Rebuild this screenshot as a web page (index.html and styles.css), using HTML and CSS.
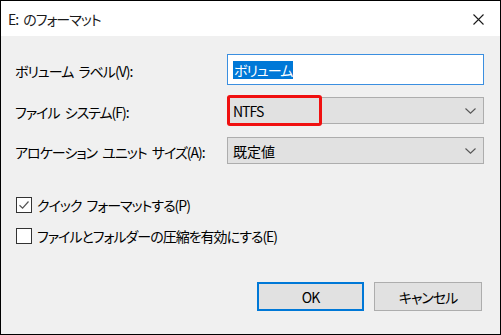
FILE: index.html
```html
<!DOCTYPE html>
<html lang="ja">
<head>
<meta charset="utf-8">
<link rel="stylesheet" href="styles.css">
</head>
<body>
<div class="window">
  <div class="titlebar">
    <span class="title">E: のフォーマット</span>
    <svg class="close" width="11" height="11" viewBox="0 0 11 11"><path d="M0.5 0.5 L10.5 10.5 M10.5 0.5 L0.5 10.5" stroke="#1a1a1a" stroke-width="1.1" fill="none"/></svg>
  </div>
  <div class="content">
    <div class="row row1">
      <span class="label">ボリューム ラベル(V):</span>
      <div class="textbox"><span class="sel">ボリューム</span></div>
    </div>
    <div class="row row2">
      <span class="label">ファイル システム(F):</span>
      <div class="combo"><span>NTFS</span>
        <svg class="chev" width="11" height="6" viewBox="0 0 11 6"><path d="M0.5 0.5 L5.5 5.2 L10.5 0.5" stroke="#555" stroke-width="1.1" fill="none"/></svg>
        <div class="highlight"></div>
      </div>
    </div>
    <div class="row row3">
      <span class="label">アロケーション ユニット サイズ(A):</span>
      <div class="combo"><span class="kanji">既定値</span>
        <svg class="chev" width="11" height="6" viewBox="0 0 11 6"><path d="M0.5 0.5 L5.5 5.2 L10.5 0.5" stroke="#555" stroke-width="1.1" fill="none"/></svg>
      </div>
    </div>
    <div class="checks">
      <div class="check">
        <span class="box"><svg width="14" height="14" viewBox="0 0 14 14"><path d="M2.5 7.2 L5.6 10.2 L11.5 3.5" stroke="#555" stroke-width="1.2" fill="none"/></svg></span>
        <span>クイック フォーマットする(P)</span>
      </div>
      <div class="check">
        <span class="box"></span>
        <span>ファイルとフォルダーの圧縮を有効にする(E)</span>
      </div>
    </div>
    <div class="buttons">
      <div class="btn ok">OK</div>
      <div class="btn cancel">キャンセル</div>
    </div>
  </div>
</div>
</body>
</html>
```

FILE: styles.css
```css
html, body {
  margin: 0;
  padding: 0;
  background: #f0f0f0;
}
body {
  font-family: "Noto Sans CJK JP", "Noto Sans", sans-serif;
  font-size: 14px;
  font-feature-settings: "palt" 1;
  letter-spacing: -1px;
  word-spacing: 3px;
  color: #000;
}
.window {
  width: 501px;
  height: 335px;
  box-sizing: border-box;
  border: 1px solid #000;
  background: #f0f0f0;
  display: flex;
  flex-direction: column;
}
.titlebar {
  height: 35px;
  background: #fff;
  display: flex;
  align-items: center;
  justify-content: space-between;
  padding: 0 16px 0 7px;
  flex: none;
}
.title {
  color: #1a1a1a;
  line-height: 18px;
  padding-top: 1px;
}
.close {
  display: block;
  margin-top: 1px;
}
.content {
  flex: 1;
  display: flex;
  flex-direction: column;
  padding: 18px 16px 0 14px;
}
.row {
  display: flex;
  align-items: center;
  justify-content: space-between;
}
.row1 { height: 31px; }
.row2 { height: 27px; margin-top: 12px; }
.row3 { height: 27px; margin-top: 13px; }
.label {
  line-height: 18px;
  padding-top: 2px;
}
.textbox {
  width: 257px;
  height: 31px;
  box-sizing: border-box;
  border: 1px solid #3b8fe0;
  background: #fff;
  display: flex;
  align-items: center;
  padding-left: 5px;
}
.sel {
  background: #0078d7;
  color: #fff;
  line-height: 18px;
  padding: 0 1px;
}
.combo {
  position: relative;
  width: 257px;
  height: 27px;
  box-sizing: border-box;
  border: 1px solid #adadad;
  background: #e1e1e1;
  display: flex;
  align-items: center;
  justify-content: space-between;
  padding: 0 7px 0 5px;
}
.combo span {
  line-height: 18px;
}
.combo .kanji {
  letter-spacing: 0;
}
.chev { display: block; }
.highlight {
  position: absolute;
  left: -1px;
  top: -3px;
  width: 95px;
  height: 31px;
  box-sizing: border-box;
  border: 3px solid #f01010;
  border-radius: 3px;
}
.checks {
  display: flex;
  flex-direction: column;
  gap: 15px;
  margin-top: 33px;
  padding-left: 1px;
}
.check {
  display: flex;
  align-items: center;
  gap: 5px;
  height: 16px;
  line-height: 18px;
}
.box {
  width: 16px;
  height: 16px;
  box-sizing: border-box;
  border: 1px solid #333;
  background: #fff;
  display: flex;
  align-items: center;
  justify-content: center;
}
.box svg { display: block; }
.buttons {
  display: flex;
  justify-content: flex-end;
  gap: 10px;
  margin-top: 38px;
  padding-right: 2px;
}
.btn {
  width: 107px;
  height: 29px;
  box-sizing: border-box;
  background: #e1e1e1;
  display: flex;
  align-items: center;
  justify-content: center;
  line-height: 18px;
}
.ok {
  border: 2px solid #0078d7;
}
.cancel {
  width: 108px;
  border: 1px solid #adadad;
}
```
